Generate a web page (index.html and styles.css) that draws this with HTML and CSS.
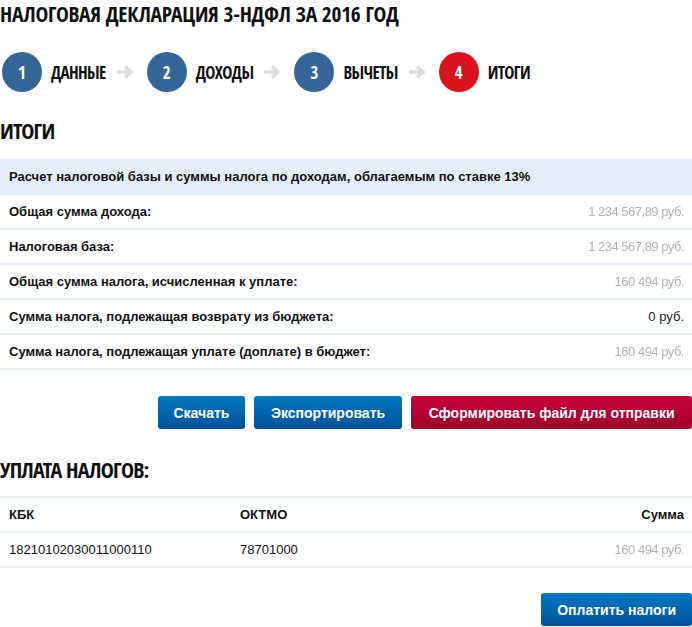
FILE: index.html
```html
<!DOCTYPE html>
<html>
<head>
  <meta charset="utf-8">
  <title>Налоговая декларация 3-НДФЛ</title>
  <link rel="stylesheet" href="styles.css">
</head>
<body>
  <div class="page">
    <h1 class="title">Налоговая декларация 3-НДФЛ за 2016 год</h1>

    <div class="steps">
      <div class="step">
        <span class="step-num">1</span>
        <span class="step-label">Данные</span>
      </div>
      <svg class="step-arrow" width="18" height="14" viewBox="0 0 18 14">
        <path d="M1 7h14M9 1.5l6 5.5-6 5.5" fill="none" stroke="#dcdcdc" stroke-width="3.5"/>
      </svg>
      <div class="step">
        <span class="step-num">2</span>
        <span class="step-label">Доходы</span>
      </div>
      <svg class="step-arrow" width="18" height="14" viewBox="0 0 18 14">
        <path d="M1 7h14M9 1.5l6 5.5-6 5.5" fill="none" stroke="#dcdcdc" stroke-width="3.5"/>
      </svg>
      <div class="step">
        <span class="step-num">3</span>
        <span class="step-label">Вычеты</span>
      </div>
      <svg class="step-arrow" width="18" height="14" viewBox="0 0 18 14">
        <path d="M1 7h14M9 1.5l6 5.5-6 5.5" fill="none" stroke="#dcdcdc" stroke-width="3.5"/>
      </svg>
      <div class="step active">
        <span class="step-num">4</span>
        <span class="step-label">Итоги</span>
      </div>
    </div>

    <h2 class="section-title">Итоги</h2>

    <div class="summary">
      <div class="summary-head">Расчет налоговой базы и суммы налога по доходам, облагаемым по ставке 13%</div>
      <div class="summary-row">
        <span class="label">Общая сумма дохода:</span>
        <span class="value hidden-value">1 234 567,89 руб.</span>
      </div>
      <div class="summary-row">
        <span class="label">Налоговая база:</span>
        <span class="value hidden-value">1 234 567,89 руб.</span>
      </div>
      <div class="summary-row">
        <span class="label">Общая сумма налога, исчисленная к уплате:</span>
        <span class="value hidden-value">160 494 руб.</span>
      </div>
      <div class="summary-row">
        <span class="label">Сумма налога, подлежащая возврату из бюджета:</span>
        <span class="value">0 руб.</span>
      </div>
      <div class="summary-row">
        <span class="label">Сумма налога, подлежащая уплате (доплате) в бюджет:</span>
        <span class="value hidden-value">160 494 руб.</span>
      </div>
    </div>

    <div class="actions">
      <button class="btn btn-blue btn-download">Скачать</button>
      <button class="btn btn-blue btn-export">Экспортировать</button>
      <button class="btn btn-red btn-send">Сформировать файл для отправки</button>
    </div>

    <h2 class="section-title pay-title">Уплата налогов:</h2>

    <div class="pay-table">
      <div class="pay-row pay-head">
        <span class="col-kbk">КБК</span>
        <span class="col-oktmo">ОКТМО</span>
        <span class="col-sum">Сумма</span>
      </div>
      <div class="pay-row">
        <span class="col-kbk">18210102030011000110</span>
        <span class="col-oktmo">78701000</span>
        <span class="col-sum hidden-value">160 494 руб.</span>
      </div>
    </div>

    <div class="actions pay-actions">
      <button class="btn btn-blue btn-pay">Оплатить налоги</button>
    </div>
  </div>
</body>
</html>
```

FILE: styles.css
```css
body {
  margin: 0;
  padding: 0;
  background-color: #fff;
  font-family: "Liberation Sans", Arial, sans-serif;
  color: #111;
}

.page {
  width: 692px;
}

.title,
.section-title,
.step-label,
.step-num {
  font-family: "Open Sans Condensed", "Open Sans", sans-serif;
  font-stretch: condensed;
  text-transform: uppercase;
  font-weight: bold;
}

.title {
  margin: 0;
  font-size: 21.5px;
  line-height: 28px;
  letter-spacing: -0.3px;
  color: #111;
}

.steps {
  display: flex;
  align-items: center;
  margin-top: 24px;
  margin-left: 2px;
  height: 40px;
}

.step {
  display: flex;
  align-items: center;
}

.step-num {
  width: 40px;
  height: 40px;
  border-radius: 50%;
  background-color: #356597;
  color: #fff;
  font-size: 17px;
  display: flex;
  align-items: center;
  justify-content: center;
}

.step.active .step-num {
  background-color: #d9121b;
}

.step-label {
  margin-left: 9px;
  font-size: 17px;
  letter-spacing: -0.6px;
}

.step-arrow {
  margin: 0 13px 0 10px;
}

.section-title {
  margin: 26px 0 0 0;
  font-size: 22px;
  line-height: 24px;
  letter-spacing: -0.8px;
}

.summary {
  margin-top: 17px;
}

.summary-head {
  background-color: #e5eef8;
  height: 36px;
  line-height: 36px;
  padding: 0 9px;
  font-size: 13px;
  font-weight: bold;
}

.summary-row {
  display: flex;
  justify-content: space-between;
  align-items: center;
  height: 33px;
  padding: 0 8px 0 9px;
  border-bottom: 2px solid #e6eef7;
  font-size: 13px;
}

.label {
  font-weight: bold;
}

.value {
  color: #222;
}

.hidden-value {
  color: #b4b4b4;
  filter: blur(0.7px);
  letter-spacing: -0.5px;
}

.actions {
  display: flex;
  justify-content: flex-end;
  gap: 9px;
  margin-top: 26px;
}

.btn {
  height: 33px;
  padding: 0 16px;
  border: none;
  border-radius: 3px;
  color: #fff;
  font-family: "Liberation Sans", Arial, sans-serif;
  font-size: 14px;
  font-weight: bold;
  cursor: pointer;
}

.btn-blue {
  background: linear-gradient(to bottom, #0079c2, #00519b);
}

.btn-red {
  background: linear-gradient(to bottom, #c8003c, #9f0027);
}

.btn-download {
  padding: 0 15.5px;
}

.btn-export {
  padding: 0 17px;
}

.btn-send {
  padding: 0 17.5px;
}

.pay-title {
  margin-top: 28px;
}

.pay-table {
  margin-top: 15px;
  border-top: 2px solid #e6eef7;
}

.pay-row {
  display: flex;
  align-items: center;
  height: 33px;
  padding: 0 8px 0 9px;
  border-bottom: 2px solid #e6eef7;
  font-size: 13px;
}

.pay-head {
  font-weight: bold;
}

.col-kbk {
  width: 231px;
}

.col-oktmo {
  flex: 1;
}

.col-sum {
  text-align: right;
}

.pay-actions {
  margin-top: 25px;
}

.btn-pay {
  padding: 0 16px;
}
```
